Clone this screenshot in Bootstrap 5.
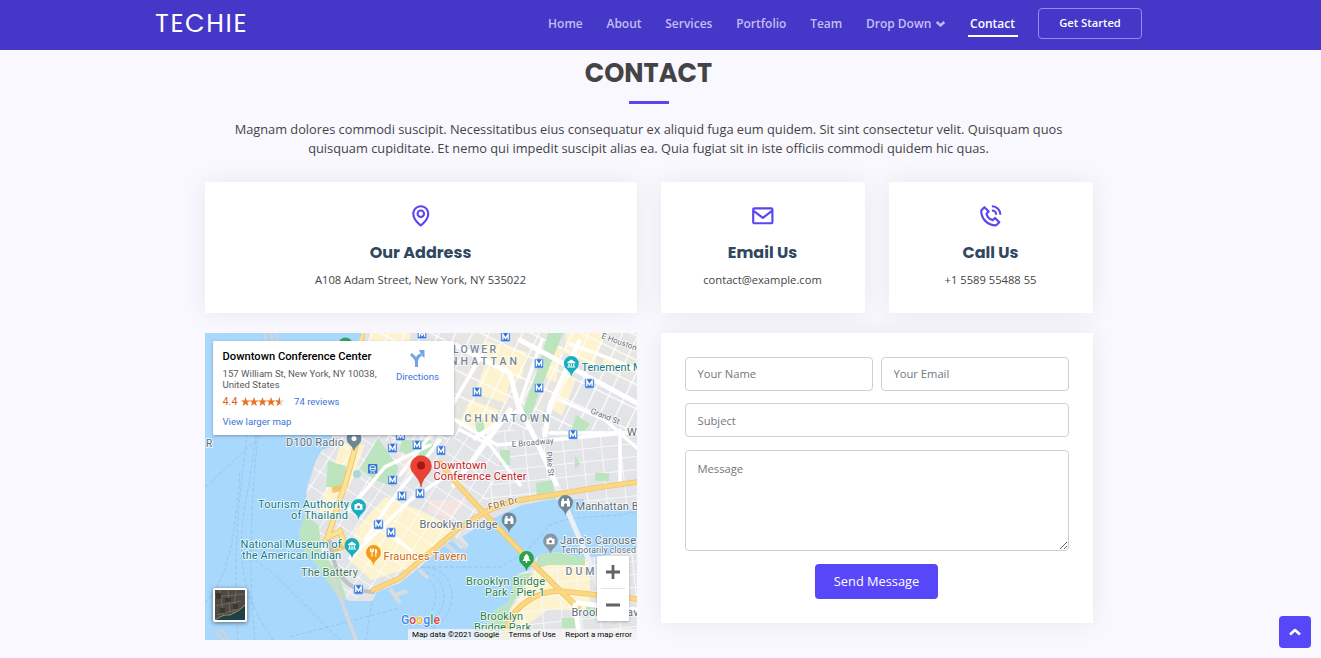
<!DOCTYPE html>
<html lang="en">
<head>
<meta charset="utf-8">
<meta name="viewport" content="width=device-width, initial-scale=1">
<title>Techie - Contact</title>
<link href="https://cdn.jsdelivr.net/npm/bootstrap@5.3.0/dist/css/bootstrap.min.css" rel="stylesheet">
<style>
  html, body { height: 658px; overflow: hidden; }
  body { background: #f9f8ff; color: #444; font-family: "Open Sans", "Liberation Sans", sans-serif; font-size: 12.8px; position: relative; }
  .gutter-end { padding-right: 24px; }
  .topbar { height: 50px; background: #4537c8; padding-top: 0; padding-bottom: 0; align-items: flex-start; }
  .topbar-inner { width: 987px; height: 46px; }
  .logo-text { font-family: Poppins, Lato, sans-serif; font-size: 25.5px; letter-spacing: 1.6px; line-height: 46px; color: #fff; text-decoration: none; }
  .topbar .navbar-nav .nav-link { padding: 2px 0 0; font-size: 12px; font-weight: 650; line-height: 18px; color: #c3bdf3; white-space: nowrap; }
  .topbar .navbar-nav .nav-link.active { color: #fff; position: relative; }
  .topbar .nav-link.active::after { content: ""; position: absolute; left: -2px; right: -3px; bottom: -4px; height: 2px; background: #fff; }
  .topbar .navbar-nav { column-gap: 23.7px; }
  .btn-start { width: 104px; height: 31px; margin-left: 23px; padding: 0; border: 1px solid #958cec; border-radius: 4px; color: #fff; font-size: 11.2px; font-weight: 650; line-height: 28px; }
  .contact-wrap { width: 912px; max-width: none; padding-left: 12px; padding-right: 12px; }
  .section-heading { margin: 8px 0 0; font-family: Poppins, Inter, sans-serif; font-size: 25.6px; font-weight: 700; line-height: 31px; text-align: center; color: #444; }
  .heading-rule { width: 40px; height: 3px; margin: 12px auto 16px; background: #5846f0; }
  .lead-copy { margin: 0 0 24px; line-height: 19.2px; text-align: center; font-size: 12.8px; }
  .info-tile, .form-panel { background: #fff; box-shadow: 0 0 24px rgba(0,0,0,.07); }
  .info-tile { height: 131px; padding-top: 21px; text-align: center; }
  .info-tile svg { width: 25.6px; height: 25.6px; fill: #5846f0; display: block; margin: 0 auto; }
  .info-tile h3 { margin: 12px 0 0; font-family: Poppins, Inter, sans-serif; font-size: 16px; font-weight: 700; line-height: 23px; color: #2f4760; }
  .info-tile p { margin: 8px 0 0; font-size: 11.2px; line-height: 16px; }
  .form-panel { height: 290px; padding: 24px; }
  .form-panel .form-control { height: 34px; padding: 3px 12px 5px; border: 1px solid #ced0d4; border-radius: 4px; font-size: 11.2px; line-height: 19px; color: #444; }
  .form-panel textarea.form-control { height: 101px; padding-top: 8px; }
  .form-panel .form-control::placeholder { color: #70777e; opacity: 1; }
  .form-grid { row-gap: 13px; }
  .btn-send { width: 123px; height: 35px; margin-top: 13px; padding: 0; background: #5846f9; color: #fff; border: 0; border-radius: 4px; font-size: 12.8px; }
  .map-frame { height: 307px; overflow: hidden; position: relative; font-family: Roboto, sans-serif; }
  .map-frame > svg { display: block; width: 432px; height: 307px; }
  .place-card { position: absolute; left: 8px; top: 8px; width: 241px; height: 94px; padding: 9px 14.5px 0 10px; background: #fff; border-radius: 1px; box-shadow: 0 1px 3px rgba(0,0,0,.3); font-size: 9.6px; line-height: 11px; color: #5b5b5b; }
  .place-name { font-size: 11.2px; font-weight: 500; line-height: 13px; color: #000; white-space: nowrap; }
  .place-card a { color: #4272db; text-decoration: none; }
  .place-score { color: #dd6414; font-size: 10.8px; }
  .zoom-box { position: absolute; left: 392px; top: 223px; width: 32px; height: 65px; background: #fff; border-radius: 1px; box-shadow: 0 1px 3px rgba(0,0,0,.25); }
  .sat-thumb { position: absolute; left: 8px; top: 255px; width: 34px; height: 34px; border: 2px solid #fff; border-radius: 2px; box-shadow: 0 1px 4px rgba(0,0,0,.5); overflow: hidden; }
  .map-credit { position: absolute; right: 0; bottom: 0; width: 229px; height: 11px; padding: 0 4.5px 0 4.5px; background: rgba(245,245,245,.8); font-size: 8px; line-height: 12px; color: #000; white-space: nowrap; }
  .back-top { position: absolute; left: 1279px; top: 616px; width: 32px; height: 32px; padding: 0; border-radius: 4px; background: #5846f9; }
</style>
</head>
<body>
<header class="gutter-end topbar navbar navbar-expand">
  <div class="topbar-inner d-flex justify-content-between align-items-center mx-auto">
    <a class="logo-text" href="#">TECHIE</a>
    <div class="d-flex align-items-center">
      <ul class="navbar-nav align-items-center">
        <li class="nav-item"><a class="nav-link" href="#">Home</a></li>
        <li class="nav-item"><a class="nav-link" href="#">About</a></li>
        <li class="nav-item"><a class="nav-link" href="#">Services</a></li>
        <li class="nav-item"><a class="nav-link" href="#">Portfolio</a></li>
        <li class="nav-item"><a class="nav-link" href="#">Team</a></li>
        <li class="nav-item"><a class="nav-link d-flex align-items-center" href="#">Drop Down
          <svg class="ms-1" width="11" height="10" viewBox="0 0 11 10" fill="none" stroke="currentColor" stroke-width="2.4"><path d="M1.700 3l3.800 3.300L9.300 3"/></svg></a></li>
        <li class="nav-item"><a class="nav-link active" href="#">Contact</a></li>
      </ul>
      <a class="btn btn-start" href="#">Get Started</a>
    </div>
  </div>
</header>

<main class="gutter-end">
  <div class="contact-wrap container">
    <h2 class="section-heading">CONTACT</h2>
    <div class="heading-rule"></div>
    <p class="lead-copy">Magnam dolores commodi suscipit. Necessitatibus eius consequatur ex aliquid fuga eum quidem. Sit sint consectetur velit. Quisquam quos<br>quisquam cupiditate. Et nemo qui impedit suscipit alias ea. Quia fugiat sit in iste officiis commodi quidem hic quas.</p>

    <div class="row">
      <div class="col-6"><div class="info-tile">
        <svg viewBox="0 0 24 24"><path d="M12 14c2.206 0 4-1.794 4-4s-1.794-4-4-4-4 1.794-4 4 1.794 4 4 4zm0-6c1.103 0 2 .897 2 2s-.897 2-2 2-2-.897-2-2 .897-2 2-2z"/><path d="M11.42 21.814a.998.998 0 0 0 1.16 0C12.884 21.599 20.029 16.44 20 10c0-4.411-3.589-8-8-8S4 5.589 4 9.995c-.029 6.445 7.116 11.604 7.42 11.819zM12 4c3.309 0 6 2.691 6 6.005.021 4.438-4.388 8.423-6 9.73-1.611-1.308-6.021-5.294-6-9.735 0-3.309 2.691-6 6-6z"/></svg>
        <h3>Our Address</h3><p>A108 Adam Street, New York, NY 535022</p>
      </div></div>
      <div class="col-3"><div class="info-tile">
        <svg viewBox="0 0 24 24"><path d="M20 4H4c-1.103 0-2 .897-2 2v12c0 1.103.897 2 2 2h16c1.103 0 2-.897 2-2V6c0-1.103-.897-2-2-2zm0 2v.511l-8 6.223-8-6.222V6h16zM4 18V9.044l7.386 5.745a.994.994 0 0 0 1.228 0L20 9.044 20.002 18H4z"/></svg>
        <h3>Email Us</h3><p>contact@example.com</p>
      </div></div>
      <div class="col-3"><div class="info-tile">
        <svg viewBox="0 0 24 24"><path d="M16.57 22a2 2 0 0 0 1.43-.59l2.71-2.71a1 1 0 0 0 0-1.41l-4-4a1 1 0 0 0-1.41 0l-1.6 1.59a7.55 7.55 0 0 1-3-1.59 7.62 7.62 0 0 1-1.59-3l1.59-1.6a1 1 0 0 0 0-1.41l-4-4a1 1 0 0 0-1.41 0L2.59 6A2 2 0 0 0 2 7.43 15.28 15.28 0 0 0 6.3 17.7 15.28 15.28 0 0 0 16.57 22zM6 5.41 8.59 8 7.3 9.29a1 1 0 0 0-.3.91 10.12 10.12 0 0 0 2.3 4.5 10.08 10.08 0 0 0 4.5 2.3 1 1 0 0 0 .91-.27L16 15.41 18.59 18l-2 2a13.28 13.28 0 0 1-8.87-3.71A13.28 13.28 0 0 1 4 7.41zM20 11h2a8.81 8.81 0 0 0-9-9v2a6.77 6.77 0 0 1 7 7z"/><path d="M13 8c2.1 0 3 .9 3 3h2c0-3.22-1.78-5-5-5z"/></svg>
        <h3>Call Us</h3><p>+1 5589 55488 55</p>
      </div></div>
    </div>

    <div class="row" style="margin-top:20px">
      <div class="col-6">
        <div class="map-frame">
          <svg viewBox="205 333 432 307">
            <defs>
              <pattern id="gridNorth" width="15" height="22" patternUnits="userSpaceOnUse" patternTransform="rotate(26)"><path d="M0 0H15M0 0V22" stroke="#fff" stroke-width="2.4"/></pattern>
              <pattern id="gridEast" width="19" height="13" patternUnits="userSpaceOnUse" patternTransform="rotate(-6)"><path d="M0 0H19M0 0V13" stroke="#f8f8f9" stroke-width="2"/></pattern>
              <pattern id="gridSouth" width="15" height="17" patternUnits="userSpaceOnUse" patternTransform="rotate(33)"><path d="M0 0H15M0 0V17" stroke="#fff" stroke-width="1.6"/></pattern>
              <path id="manhattan" d="M362 333H637V510L586 508L584 499L548 500L522 505L500 515L478 526L462 537L469 545L461 549L452 540L440 549L420 567L400 583L377 592L372 601L350 601L338 597L329 583L318 567L305 551L299 534L305 515L307 488L316 460L322 450L330 447L335 415L345 380Z"/>
              <path id="brooklyn" d="M637 548L600 557L578 557L556 552L538 555L530 569L515 576L509 602L494 611L478 640H637Z"/>
              <clipPath id="mClip"><use href="#manhattan"/></clipPath>
              <clipPath id="bClip"><use href="#brooklyn"/></clipPath>
              <g id="metro"><rect x="-4.7" y="-4.7" width="9.4" height="9.4" rx="1.2" fill="#3475d9" stroke="#dcebfb" stroke-width=".7"/><path d="M-2.6 2.8V-2.6L0 1.4L2.6-2.6V2.8" fill="none" stroke="#fff" stroke-width="1.4"/></g>
              <path id="drop" d="M0 13C-.6 9.600-2.600 7.800-5 5.460A7.4 7.4 0 1 1 5 5.460C2.600 7.800 .6 9.600 0 13Z"/>
              <g id="museum" fill="#fff"><path d="M-4-1.2L0-4L4-1.2V-.3H-4Z"/><path d="M-3 .3h1.3v2.5H-3zM-.6.3H.6v2.5H-.6zM1.7.3H3v2.5H1.7zM-4 3.1h8v1h-8z"/></g>
              <path id="bridgeTower" d="M-4.500 4V-1.500L-3.500-2V-4H-1.500V-1.500H1.500V-4H3.500V-2L4.500-1.500V4H1.500V1.500Q0-.2-1.500 1.500V4Z" fill="#fff"/>
              <g id="camera"><path d="M-4-2.3H-2L-1.2-3.5H1.2L2-2.3H4V3.2H-4Z" fill="#fff"/><circle r="1.5" cy=".5" fill="#60899c"/></g>
            </defs>
            <rect x="205" y="333" width="432" height="307" fill="#a9d8fd"/>
            <g fill="none" stroke="#93c0e8" stroke-width=".8" stroke-dasharray="4 2">
              <path d="M263 333C250 420 229 520 238 640M270 333C258 430 244 530 255 640M256 435L249 485C232 560 245 600 273 640M205 487L240 455L262 435M205 602C230 580 237 520 240 470M255 560L275 575L340 640M290 637L400 608M372 602L366 640M420 567H500L526 552L550 525C580 512 610 520 637 511"/>
              <path d="M415 568C428 565 445 570 449 582C457 600 449 625 420 635M420 573C433 570 441 580 443 590C447 608 439 620 416 626M423 578C436 580 439 596 432 610"/>
            </g>
            <path d="M264 333l3 12M270 333l4 11M276 333l2 11M215 632l9 8M220 629l9 10" stroke="#c9d4df" stroke-width="3"/>
            <use href="#manhattan" fill="#e3e4e7"/>
            <g clip-path="url(#mClip)">
              <path d="M455 333H637V390L570 362L535 425L510 415L490 440L455 425L440 400Z" fill="#e8e6e2"/>
              <path d="M370 333H410V345H370ZM484 340L527 352L521 380L486 363ZM512 373L505 403L474 393L486 363ZM549 352L563 345L556 382L544 377ZM566 333H605L594 366L565 353ZM470 399L499 410L489 433L460 422ZM548 406L565 374L576 380L562 416ZM341 443L365 445L349 488L327 520L318 515ZM355 530L385 497L420 510L455 528L410 568L371 580L349 560ZM605 355L637 366V372L601 367Z" fill="#fdf3cf"/>
              <path d="M397 450L425 446V474H400ZM430 500L468 500L450 520L427 511Z" fill="#f2e5e2"/>
              <path d="M337 333L470 333L637 333V430H475L430 445L380 440Z" fill="url(#gridNorth)"/>
              <path d="M493 430H637V505H480L500 460Z" fill="url(#gridEast)"/>
              <path d="M415 430L493 430L500 460L480 530L410 575L350 601L297 550L310 440Z" fill="url(#gridSouth)"/>
              <path d="M548 333H563L539 393L528 424L520 419L539 365ZM576 415L590 424L577 441L570 435ZM475 422L483 420L486 438L478 441ZM402 440L430 440L436 449L419 460L399 451ZM536 483L552 480L556 500L537 499ZM328 461L346 466L348 487H326ZM378 438L390 455L398 467L394 487L375 480L360 469ZM500 450h10v15h-10zM575 455l5 9-5 5zM595 473h14v8h-14z" fill="#bce4be"/>
              <path d="M305 515L319 526L321 550L339 575L347 601L325 590L295 550L298 532Z" fill="#bce4be"/>
              <circle cx="357" cy="474" r="4" fill="#a9d8d8"/>
              <g fill="none" stroke="#fff" stroke-linecap="round">
                <path stroke-width="5" d="M455 345L510 373L518 405L535 438L558 488M520 340L637 403M510 410L454 485M475 438L520 410M545 435L550 405L579 342"/>
                <path stroke-width="3.5" d="M455 420L497 445L637 432M460 430L490 445L520 485M550 433L637 433M400 475L448 412L485 350M365 540L392 500L440 440M350 558L410 500L455 470M375 520L410 550M345 515L385 467L430 445M542 340L519 405M570 344L595 353L637 370M560 400L605 420L637 448M620 430V485"/>
              </g>
              <g fill="none"><path d="M362 333C354 380 360 410 356 445L345 485C338 503 334 520 327 538L340 531L345 546L332 550M345 487L332 490" stroke="#f2c76b" stroke-width="6"/><path d="M362 333C354 380 360 410 356 445L345 485C338 503 334 520 327 538L340 531L345 546" stroke="#fce398" stroke-width="4"/></g>
            </g>
            <path d="M330 540C333 574 348 592 375 592" fill="none" stroke="#bdc4c8" stroke-width="4"/>
            <path d="M332 575L356 640" stroke="#d5d9dc" stroke-width="3.5"/>
            <path d="M390 589L400 603M395 595L407 591M419 570L428 578M442 541L464 560M448 535L467 548" stroke="#d7dcdf" stroke-width="4"/>
            <use href="#brooklyn" fill="#e3e4e7"/>
            <g clip-path="url(#bClip)">
              <path d="M540 560L590 556V610L548 610L520 630L510 610L526 588Z" fill="#fdf3cf"/>
              <rect x="475" y="540" width="162" height="100" fill="url(#gridEast)"/>
              <path d="M538 555L558 552L585 557V565H548L535 569ZM515 576L532 572L510 608L500 640H476L494 611L508 602ZM562 618H577V628H562ZM586 605H597V615H586Z" fill="#bce4be"/>
            </g>
            <g fill="none" stroke-linecap="round">
              <path d="M558 488L565 505L588 558L610 620" stroke="#edf0f2" stroke-width="5"/>
              <path d="M637 482L595 488L545 496L510 502L485 512L458 529L415 565L400 578L373 590M440 463L458 485L485 514L527 558L575 605M505 640C505 610 535 591 560 591L637 599M560 591L578 607" stroke="#f1c568" stroke-width="5.5"/>
              <path d="M637 482L595 488L545 496L510 502L485 512L458 529L415 565L400 578L373 590M440 463L458 485L485 514L527 558L575 605M505 640C505 610 535 591 560 591L637 599M560 591L578 607" stroke="#fbd783" stroke-width="3.8"/>
              <path d="M575 605L580 640M578 603L637 610" stroke="#fff" stroke-width="5"/>
            </g>
            <g>
              <use href="#metro" x="422" y="334"/><use href="#metro" x="505.500" y="337"/><use href="#metro" x="539" y="363.500"/><use href="#metro" x="539" y="388"/><use href="#metro" x="477" y="392"/><use href="#metro" x="589.500" y="383.500"/><use href="#metro" x="573" y="434.500"/><use href="#metro" x="400.500" y="436"/><use href="#metro" x="392.500" y="448"/><use href="#metro" x="417" y="445"/><use href="#metro" x="441" y="450.500"/><use href="#metro" x="392.500" y="480"/><use href="#metro" x="402" y="496"/><use href="#metro" x="420" y="493.500"/><use href="#metro" x="378.500" y="524.500"/><use href="#metro" x="391" y="532.500"/><use href="#metro" x="358.500" y="589.500"/>
              <rect x="368" y="464" width="9.400" height="9.400" rx="1.200" fill="#3475d9"/><rect x="370.200" y="465.800" width="5" height="5" rx="1" fill="none" stroke="#fff"/><path d="M370.500 472.200h1.300M373.600 472.200h1.300M370.500 468.500h4.500" stroke="#fff"/>
            </g>
            <g>
              <use href="#drop" x="345.500" y="345" fill="#34a161"/>
              <g transform="translate(354 438.500)"><use href="#drop" fill="#6f8794"/><circle r="2.500" fill="#fff"/></g>
              <g transform="translate(571.300 363.500)"><use href="#drop" fill="#17afbd"/><use href="#museum"/></g>
              <g transform="translate(358.500 506.500)"><use href="#drop" fill="#17afbd"/><use href="#camera"/></g>
              <g transform="translate(352 545.500)"><use href="#drop" fill="#17afbd"/><use href="#museum"/></g>
              <g transform="translate(373.500 552.500)"><use href="#drop" fill="#f39a16"/><path d="M-3-4V-1.300H0V-4M-1.500-4V4.200M2.300 4.200V-3.600" fill="none" stroke="#fff" stroke-width="1.100"/><path d="M1.800-4Q4-3 3.500.5H1.800Z" fill="#fff"/></g>
              <g transform="translate(509 520)"><use href="#drop" fill="#708795"/><use href="#bridgeTower"/></g>
              <g transform="translate(565.500 502.500)"><use href="#drop" fill="#708795"/><use href="#bridgeTower"/></g>
              <g transform="translate(550.500 541)"><use href="#drop" fill="#8797a2"/><use href="#camera"/></g>
              <g transform="translate(526.500 558.500)"><use href="#drop" fill="#27a34c"/><path d="M0-5L3-1H2L4 2.500H.7V4.500H-.7V2.500H-4L-2-1H-3Z" fill="#fff"/></g>
              <path d="M421 487C420.200 481 417 477.500 413.600 473.400A10.400 10.400 0 1 1 428.400 473.400C425 477.500 421.800 481 421 487Z" fill="#ea4335" stroke="#c9362a" stroke-width=".6"/><circle cx="421" cy="465.500" r="4" fill="#a11a12"/>
            </g>
            <g font-family="Roboto, sans-serif" font-size="11" font-weight="450" stroke="#fff" stroke-opacity=".8" stroke-width="1.8" paint-order="stroke" stroke-linejoin="round">
              <g fill="#77879c" font-size="10.500" font-weight="500">
                <text x="453" y="353" textLength="43">LOWER</text><text x="450" y="364.500" textLength="67">NHATTAN</text>
                <text x="464.500" y="421.500" textLength="85">CHINATOWN</text><text x="565.500" y="574.500" textLength="29">DUM</text>
              </g>
              <g fill="#5d6d79">
                <text x="206" y="447" font-size="10">R</text><text x="286" y="445.500" textLength="58">D100 Radio</text>
                <text x="419.500" y="527.500" textLength="78">Brooklyn Bridge</text><text x="575.500" y="510" textLength="63">Manhattan B</text>
                <text x="560" y="543.500" textLength="76">Jane's Carouse</text><text x="561" y="553" font-size="8.800" textLength="75">Temporarily closed</text>
                <text x="571.500" y="616" textLength="67">Brooklyn Nav</text><text x="627" y="436">W</text>
                <g font-size="8"><text transform="translate(601 338) rotate(20)" textLength="37">E Houston</text><text transform="translate(590 413) rotate(22)">Grand St</text><text transform="translate(512 447) rotate(-5)" textLength="42">E Broadway</text><text transform="translate(546 452) rotate(84)">Pike St</text></g>
              </g>
              <g fill="#0c7c85"><text x="581.500" y="371" textLength="61">Tenement M</text><text x="258" y="508" textLength="91">Tourism Authority</text><text x="291" y="519" textLength="57">of Thailand</text><text x="240.500" y="547.500" textLength="101">National Museum of</text><text x="242" y="558.500" textLength="99">the American Indian</text></g>
              <g fill="#2a8048"><text x="301" y="576" fill="#3d7558" textLength="57">The Battery</text><text x="466" y="585" textLength="79">Brooklyn Bridge</text><text x="485" y="596" textLength="60">Park - Pier 1</text><text x="480" y="619.500" textLength="43">Brooklyn</text><text x="474" y="630.500" textLength="57">Bridge Park</text></g>
              <text x="383.500" y="560" fill="#cc6a10" textLength="83">Fraunces Tavern</text>
              <text transform="translate(489 510) rotate(-14)" fill="#866323" font-size="8.800" textLength="30">FDR Dr</text>
              <g fill="#c5221f"><text x="433.500" y="468.500" textLength="53">Downtown</text><text x="433.500" y="479.500" textLength="93">Conference Center</text></g>
              <text x="401" y="623.500" font-size="12.200" font-weight="500" textLength="39" stroke-width="1.500"><tspan fill="#4285f4">G</tspan><tspan fill="#ea4335">o</tspan><tspan fill="#fbbc05">o</tspan><tspan fill="#4285f4">g</tspan><tspan fill="#34a853">l</tspan><tspan fill="#ea4335">e</tspan></text>
            </g>
          </svg>
          <div class="place-card d-flex justify-content-between">
            <div>
              <div class="place-name">Downtown Conference Center</div>
              <div style="margin-top:5px">157 William St, New York, NY 10038,<br>United States</div>
              <div class="d-flex align-items-center" style="margin-top:6px"><span class="place-score">4.4</span>
                <svg class="ms-1" width="43" height="10" viewBox="0 0 43 10"><defs><path id="star" d="M4.500 0L5.700 3.400H9.200L6.400 5.500L7.400 9L4.500 6.900L1.600 9L2.600 5.500L-.2 3.400H3.300Z"/><clipPath id="halfStar"><path d="M34 0h5v10h-5z"/></clipPath></defs><g fill="#e77425"><use href="#star"/><use href="#star" x="8.500"/><use href="#star" x="17"/><use href="#star" x="25.500"/></g><use href="#star" x="34" fill="#d4d0cd"/><g clip-path="url(#halfStar)"><use href="#star" x="34" fill="#e77425"/></g></svg>
                <a href="#" style="margin-left:9.5px">74 reviews</a></div>
              <div style="margin-top:9px"><a href="#">View larger map</a></div>
            </div>
            <a href="#" class="text-center"><svg class="d-block mx-auto" style="margin-bottom:3px" width="16" height="18" viewBox="0 0 16 18"><path d="M7.500 17V12Q7.500 9.500 5.500 7.500L2 4M7.500 13Q7.500 6 12 5" fill="none" stroke="#73a4e6" stroke-width="3"/><path d="M10 0H15.500V8L12.700 5.700Z" fill="#73a4e6"/></svg><span class="d-block">Directions</span></a>
          </div>
          <div class="sat-thumb"><svg class="d-block" width="30" height="30" viewBox="0 0 30 30"><rect width="30" height="30" fill="#4e4a43"/><path d="M5 0L9 30M13 0L15 23M21 0L18 25M0 7L30 4M0 16L26 11M2 25L28 18" stroke="#746b60" stroke-width=".9"/><path d="M1 3h5v6H1zM10 8h6v4h-6zM18 14h5v5h-5zM5 18h5v5H5z" fill="#38382f"/><path d="M0 30Q8 24 15 25Q25 21 30 15V30Z" fill="#1c4044"/><path d="M0 30Q8 24 15 25Q25 21 30 15" fill="none" stroke="#999074"/></svg></div>
          <div class="zoom-box"><svg class="d-block" width="32" height="65" viewBox="0 0 32 65"><path d="M9 16H23M16 9V23M9 49H23" stroke="#636363" stroke-width="2.800"/><path d="M4 32.500H28" stroke="#e4e4e4"/></svg></div>
          <div class="map-credit d-flex justify-content-between"><span>Map data ©2021 Google</span><span>Terms of Use</span><span>Report a map error</span></div>
        </div>
      </div>
      <div class="col-6">
        <form class="form-panel">
          <div class="row gx-2 form-grid">
            <div class="col-6"><input class="form-control" placeholder="Your Name"></div>
            <div class="col-6"><input class="form-control" placeholder="Your Email"></div>
            <div class="col-12" style="margin-top:-1px"><input class="form-control pt-1 pb-1" placeholder="Subject"></div>
            <div class="col-12"><textarea class="form-control d-block" placeholder="Message"></textarea></div>
          </div>
          <button type="button" class="btn btn-send d-block mx-auto">Send Message</button>
        </form>
      </div>
    </div>
  </div>
</main>
<a href="#" class="back-top d-flex align-items-center justify-content-center" aria-label="Back to top"><svg width="14" height="12" viewBox="0 0 14 12" fill="none" stroke="#fff" stroke-width="2.600" stroke-linejoin="round"><path d="M2 8.500L7 4L12 8.500"/></svg></a>
<script src="https://cdn.jsdelivr.net/npm/bootstrap@5.3.0/dist/js/bootstrap.bundle.min.js"></script>
</body>
</html>
